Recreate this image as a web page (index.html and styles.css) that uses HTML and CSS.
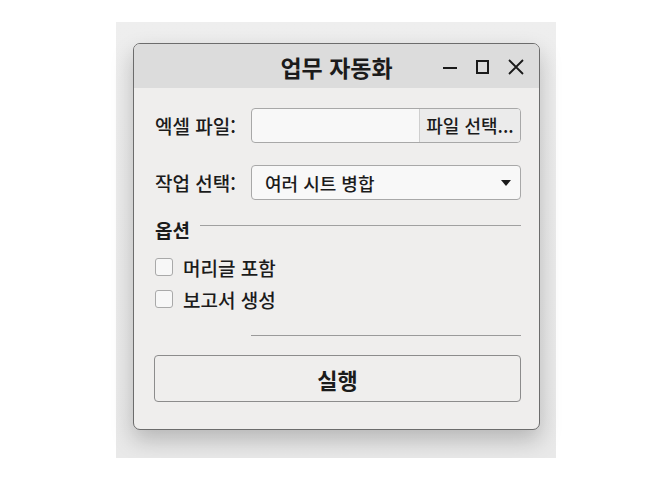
FILE: index.html
```html
<!DOCTYPE html>
<html lang="ko">
<head>
  <meta charset="UTF-8" />
  <title>업무 자동화</title>
  <link rel="stylesheet" href="styles.css">
</head>
<body>
  <div class="backdrop">
    <div class="window">
      <div class="titlebar">
        <span></span>
        <span class="title">업무 자동화</span>
        <svg class="controls" width="82" height="24" viewBox="0 0 82 24">
          <line x1="1" y1="13" x2="15" y2="13" stroke="#1a1a1a" stroke-width="2" />
          <rect x="35" y="6" width="11" height="12" fill="none" stroke="#1a1a1a" stroke-width="2" />
          <path d="M67 5 L81 19 M81 5 L67 19" stroke="#1a1a1a" stroke-width="1.8" fill="none" />
        </svg>
      </div>

      <div class="content">
        <div class="row">
          <label class="label">엑셀 파일:</label>
          <div class="field file-field">
            <span class="file-path"></span>
            <span class="file-btn">파일 선택...</span>
          </div>
        </div>

        <div class="row row-gap">
          <label class="label">작업 선택:</label>
          <div class="field combo">
            <span>여러 시트 병합</span>
            <span class="arrow"></span>
          </div>
        </div>

        <div class="group-head">
          <span>옵션</span>
          <span class="group-line"></span>
        </div>

        <div class="checks">
          <div class="check"><span class="box"></span>머리글 포함</div>
          <div class="check"><span class="box"></span>보고서 생성</div>
        </div>

        <div class="separator"></div>

        <button class="run">실행</button>
      </div>
    </div>
  </div>
</body>
</html>
```

FILE: styles.css
```css
* { box-sizing: border-box; }

body {
  margin: 0;
  background: #ffffff;
  font-family: "Noto Sans CJK KR", "Noto Sans", sans-serif;
  color: #1b1b1b;
}

.backdrop {
  width: 440px;
  height: 436px;
  margin: 22px 0 0 116px;
  padding: 21px 16px 0 17px;
  background: linear-gradient(#eeeeee, #e9e9e9);
}

.window {
  height: 387px;
  border: 1px solid #6c6c6c;
  border-radius: 7px;
  background: #efeeed;
  box-shadow: 0 10px 22px rgba(0,0,0,0.22);
  overflow: hidden;
}

.titlebar {
  height: 44px;
  padding-top: 2px;
  background: #dcdcdc;
  display: grid;
  grid-template-columns: 1fr auto 1fr;
  align-items: center;
}

.title {
  font-size: 23px;
  font-weight: 700;
}

.controls {
  justify-self: end;
  margin-right: 15px;
}

.content {
  padding: 20px 18px 0 21px;
}

.row {
  display: flex;
  align-items: center;
}

.row-gap {
  margin-top: 22px;
}

.label {
  width: 96px;
  font-size: 19px;
  font-weight: 500;
  white-space: nowrap;
}

.field {
  flex: 1;
  height: 35px;
  border: 1px solid #a8a8a8;
  border-radius: 4px;
  background: #f8f8f8;
}

.file-field {
  display: flex;
  overflow: hidden;
}

.file-path {
  flex: 1;
}

.file-btn {
  width: 101px;
  border-left: 1px solid #cfcfcf;
  background: #ebebeb;
  font-size: 18px;
  font-weight: 500;
  line-height: 33px;
  text-align: center;
  white-space: nowrap;
}

.combo {
  display: flex;
  align-items: center;
  justify-content: space-between;
  padding: 0 9px 0 13px;
  font-size: 18px;
  font-weight: 500;
}

.arrow {
  width: 0;
  height: 0;
  border-left: 5px solid transparent;
  border-right: 5px solid transparent;
  border-top: 6px solid #1b1b1b;
}

.group-head {
  display: flex;
  height: 24px;
  margin-top: 18px;
  font-size: 19px;
  font-weight: 700;
  line-height: 24px;
}

.group-line {
  flex: 1;
  height: 1px;
  margin: 7px 0 0 10px;
  background: #a0a0a0;
}

.checks {
  margin-top: 9px;
}

.check {
  display: flex;
  align-items: center;
  height: 32px;
  font-size: 19px;
  font-weight: 500;
}

.box {
  width: 18px;
  height: 18px;
  margin-right: 10px;
  border: 1px solid #a9a9a9;
  border-radius: 3px;
  background: #f7f7f7;
}

.separator {
  height: 1px;
  margin: 20px 0 0 96px;
  background: #9a9a9a;
}

.run {
  display: block;
  width: 367px;
  height: 47px;
  margin: 19px 0 0 -1px;
  border: 1px solid #8c8c8c;
  border-radius: 4px;
  background: #efeeed;
  font-family: inherit;
  font-size: 22px;
  font-weight: 700;
  color: #1b1b1b;
}
```
